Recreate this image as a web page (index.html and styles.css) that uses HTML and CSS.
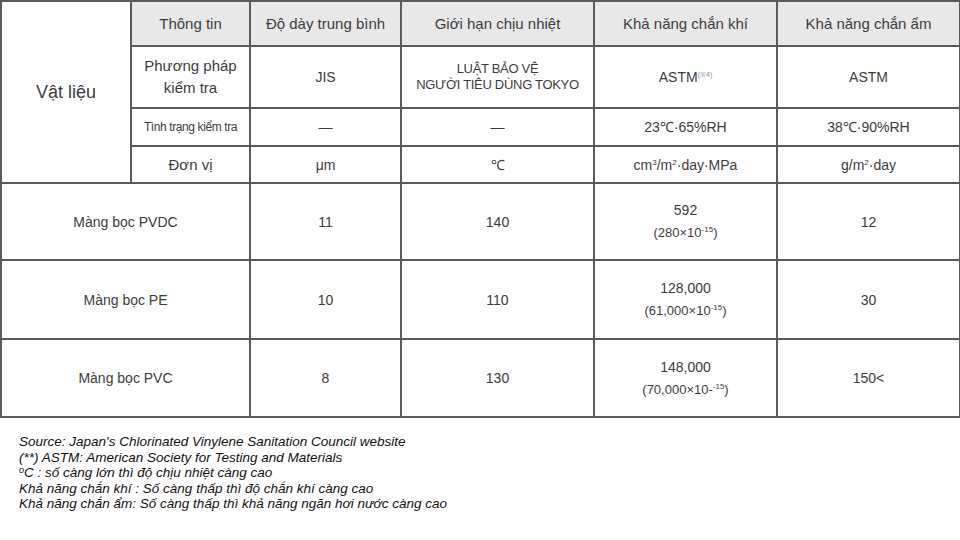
FILE: index.html
```html
<!DOCTYPE html>
<html lang="vi">
<head>
<meta charset="utf-8">
<title>Bảng so sánh màng bọc</title>
<link rel="stylesheet" href="styles.css">
</head>
<body>
<table class="grid">
  <colgroup>
    <col class="c1"><col class="c2"><col class="c3"><col class="c4"><col class="c5"><col class="c6">
  </colgroup>
  <tr class="r-head">
    <td class="material" rowspan="4">Vật liệu</td>
    <td class="hd">Thông tin</td>
    <td class="hd">Độ dày trung bình</td>
    <td class="hd">Giới hạn chịu nhiệt</td>
    <td class="hd">Khả năng chắn khí</td>
    <td class="hd">Khả năng chắn ẩm</td>
  </tr>
  <tr class="r-method">
    <td class="lbl two">Phương pháp<br>kiểm tra</td>
    <td>JIS</td>
    <td class="law">LUẬT BẢO VỆ<br>NGƯỜI TIÊU DÙNG TOKYO</td>
    <td>ASTM<sup class="note">(※4)</sup></td>
    <td>ASTM</td>
  </tr>
  <tr class="r-cond">
    <td class="small">Tình trạng kiểm tra</td>
    <td>—</td>
    <td>—</td>
    <td>23℃·65%RH</td>
    <td>38℃·90%RH</td>
  </tr>
  <tr class="r-unit">
    <td class="lbl">Đơn vị</td>
    <td>μm</td>
    <td>℃</td>
    <td>cm<sup>3</sup>/m<sup>2</sup>·day·MPa</td>
    <td>g/m<sup>2</sup>·day</td>
  </tr>
  <tr class="r-data r1">
    <td class="name" colspan="2">Màng bọc PVDC</td>
    <td>11</td>
    <td>140</td>
    <td class="two">592<br><span class="sub">(280×10<sup>-15</sup>)</span></td>
    <td>12</td>
  </tr>
  <tr class="r-data r2">
    <td class="name" colspan="2">Màng bọc PE</td>
    <td>10</td>
    <td>110</td>
    <td class="two">128,000<br><span class="sub">(61,000×10<sup>-15</sup>)</span></td>
    <td>30</td>
  </tr>
  <tr class="r-data r3">
    <td class="name" colspan="2">Màng bọc PVC</td>
    <td>8</td>
    <td>130</td>
    <td class="two">148,000<br><span class="sub">(70,000×10-<sup>-15</sup>)</span></td>
    <td>150&lt;</td>
  </tr>
</table>
<div class="notes">
  <p>Source: Japan's Chlorinated Vinylene Sanitation Council website</p>
  <p>(**) ASTM: American Society for Testing and Materials</p>
  <p><sup>o</sup>C : số càng lớn thì độ chịu nhiệt càng cao</p>
  <p>Khả năng chắn khí : Số càng thấp thì độ chắn khí càng cao</p>
  <p>Khả năng chắn ẩm: Số càng thấp thì khả năng ngăn hơi nước càng cao</p>
</div>
</body>
</html>
```
FILE: styles.css
```css
html, body {
  margin: 0;
  padding: 0;
  background: #ffffff;
}
body {
  width: 960px;
  height: 540px;
  overflow: hidden;
  font-family: "Liberation Sans", Arial, sans-serif;
}
.grid {
  border-collapse: collapse;
  table-layout: fixed;
  width: 959px;
  margin: 0;
  color: #3d3d3d;
}
.c1 { width: 130px; }
.c2 { width: 119px; }
.c3 { width: 151px; }
.c4 { width: 193px; }
.c5 { width: 183px; }
.c6 { width: 183px; }
.grid td {
  border: 2px solid #5a5a5a;
  text-align: center;
  vertical-align: middle;
  padding: 0;
  font-size: 14px;
  line-height: 18px;
}
.grid td.hd {
  background: #e8e8e8;
  font-size: 15px;
}
.r-head { height: 45px; }
.r-method { height: 62px; }
.r-cond { height: 38px; }
.r-unit { height: 37px; }
.r1 { height: 77px; }
.r2 { height: 79px; }
.r3 { height: 78px; }
.grid td.material {
  font-size: 18px;
  background: #ffffff;
  padding-top: 1px;
  padding-bottom: 2px;
}
.grid td.lbl {
  font-size: 15px;
  line-height: 21px;
}
.grid td.small {
  font-size: 12px;
  letter-spacing: -0.4px;
}
.grid td.law {
  font-size: 13px;
  letter-spacing: -0.3px;
  line-height: 16px;
}
.grid td.name {
  font-size: 14px;
}
.grid td.two {
  line-height: 22px;
}
.sub {
  font-size: 13px;
}
sup {
  font-size: 8px;
  line-height: 0;
  vertical-align: 5px;
}
sup.note {
  color: #888888;
  font-size: 7px;
}
.notes {
  padding: 16px 0 0 19px;
  font-style: italic;
  font-size: 13.5px;
  line-height: 15.5px;
  color: #111111;
}
.notes p {
  margin: 0;
}
.notes sup {
  font-size: 9px;
  vertical-align: 4px;
}
```
